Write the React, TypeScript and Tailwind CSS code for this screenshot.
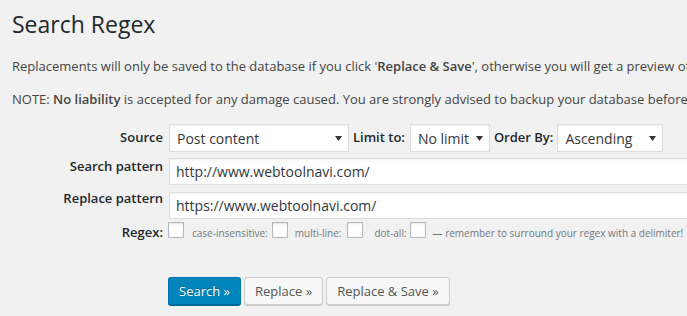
import React from "react";

function Select({ text, width }: { text: string; width: string }) {
  return (
    <div
      className={`${width} h-[28px] flex items-center justify-between bg-white border border-[#ddd] shadow-[inset_0_1px_2px_rgba(0,0,0,0.07)] pl-[7px] pr-[6px] text-[14px] text-[#32373c]`}
    >
      <span className="whitespace-nowrap">{text}</span>
      <svg width="7" height="5" viewBox="0 0 7 5" className="shrink-0">
        <polygon points="0,0 7,0 3.5,5" fill="#333" />
      </svg>
    </div>
  );
}

function Checkbox() {
  return (
    <span className="inline-block w-[16px] h-[16px] bg-white border border-[#b4b9be] shadow-[inset_0_1px_2px_rgba(0,0,0,0.1)] shrink-0" />
  );
}

export default function App() {
  return (
    <div
      className="w-[687px] h-[316px] overflow-hidden bg-[#f1f1f1] text-[#444] pl-[12px]"
      style={{ fontFamily: '"Open Sans", "Noto Sans", sans-serif' }}
    >
      <h1 className="text-[23px] leading-[29px] pt-[10px] pb-[4px] font-normal text-[#23282d] whitespace-nowrap">
        Search Regex
      </h1>
      <p className="text-[13px] leading-[19.5px] mt-[14px] mb-[13px] whitespace-nowrap">
        Replacements will only be saved to the database if you click '
        <strong className="font-semibold">Replace &amp; Save</strong>', otherwise you will get a preview of what
        will happen.
      </p>
      <p className="text-[13px] leading-[19.5px] my-[13px] whitespace-nowrap">
        NOTE: <strong className="font-semibold">No liability</strong> is accepted for any damage caused. You are
        strongly advised to backup your database before making any changes.
      </p>

      <div className="flex flex-col mt-[15px] text-[13px] text-[#23282d]">
        <div className="flex items-center h-[28px]">
          <div className="w-[151px] shrink-0 text-right font-semibold">Source</div>
          <div className="ml-[6px] shrink-0">
            <Select text="Post content" width="w-[180px]" />
          </div>
          <div className="ml-[4px] shrink-0 font-semibold whitespace-nowrap">Limit to:</div>
          <div className="ml-[5px] shrink-0">
            <Select text="No limit" width="w-[80px]" />
          </div>
          <div className="ml-[4px] shrink-0 font-semibold whitespace-nowrap">Order By:</div>
          <div className="ml-[4px] shrink-0">
            <Select text="Ascending" width="w-[106px]" />
          </div>
        </div>

        <div className="flex items-start mt-[6px]">
          <div className="w-[151px] shrink-0 text-right font-semibold leading-[19.5px] -mt-[1px] whitespace-nowrap">
            Search pattern
          </div>
          <div className="ml-[6px] shrink-0 w-[560px] h-[27px] flex items-center bg-white border border-[#ddd] shadow-[inset_0_1px_2px_rgba(0,0,0,0.07)] px-[6px] text-[14px] text-[#32373c] whitespace-nowrap">
            http://www.webtoolnavi.com/
          </div>
        </div>

        <div className="flex items-start mt-[7px]">
          <div className="w-[151px] shrink-0 text-right font-semibold leading-[19.5px] -mt-[3px] whitespace-nowrap">
            Replace pattern
          </div>
          <div className="ml-[6px] shrink-0 w-[560px] h-[27px] flex items-center bg-white border border-[#ddd] shadow-[inset_0_1px_2px_rgba(0,0,0,0.07)] px-[6px] text-[14px] text-[#32373c] whitespace-nowrap">
            https://www.webtoolnavi.com/
          </div>
        </div>

        <div className="flex items-center mt-[6px] h-[16px] whitespace-nowrap">
          <div className="w-[151px] shrink-0 text-right font-semibold">Regex:</div>
          <div className="ml-[5px] shrink-0">
            <Checkbox />
          </div>
          <span className="ml-[8px] shrink-0 text-[10px] text-[#72777c]">case-insensitive:</span>
          <div className="ml-[4px] shrink-0">
            <Checkbox />
          </div>
          <span className="ml-[7px] shrink-0 text-[10px] text-[#72777c]">multi-line:</span>
          <div className="ml-[6px] shrink-0">
            <Checkbox />
          </div>
          <span className="ml-[11px] shrink-0 text-[10px] text-[#72777c]">dot-all:</span>
          <div className="ml-[3px] shrink-0">
            <Checkbox />
          </div>
          <span className="ml-[7px] shrink-0 text-[10px] text-[#72777c]">
            — remember to surround your regex with a delimiter!
          </span>
        </div>

        <div className="flex items-start mt-[36px] ml-[156px] gap-[3px] whitespace-nowrap">
          <button className="h-[28px] px-[10px] pb-[1px] text-[13px] leading-[26px] text-white bg-[#0085ba] border border-[#0073aa] border-b-[#006799] rounded-[3px] shadow-[0_1px_0_#006799] [text-shadow:0_-1px_1px_#006799]">
            Search »
          </button>
          <button className="h-[28px] px-[10px] pb-[1px] text-[13px] leading-[26px] text-[#555] bg-[#f7f7f7] border border-[#ccc] rounded-[3px] shadow-[0_1px_0_#ccc]">
            Replace »
          </button>
          <button className="h-[28px] px-[10px] pb-[1px] text-[13px] leading-[26px] text-[#555] bg-[#f7f7f7] border border-[#ccc] rounded-[3px] shadow-[0_1px_0_#ccc]">
            Replace &amp; Save »
          </button>
        </div>
      </div>
    </div>
  );
}
